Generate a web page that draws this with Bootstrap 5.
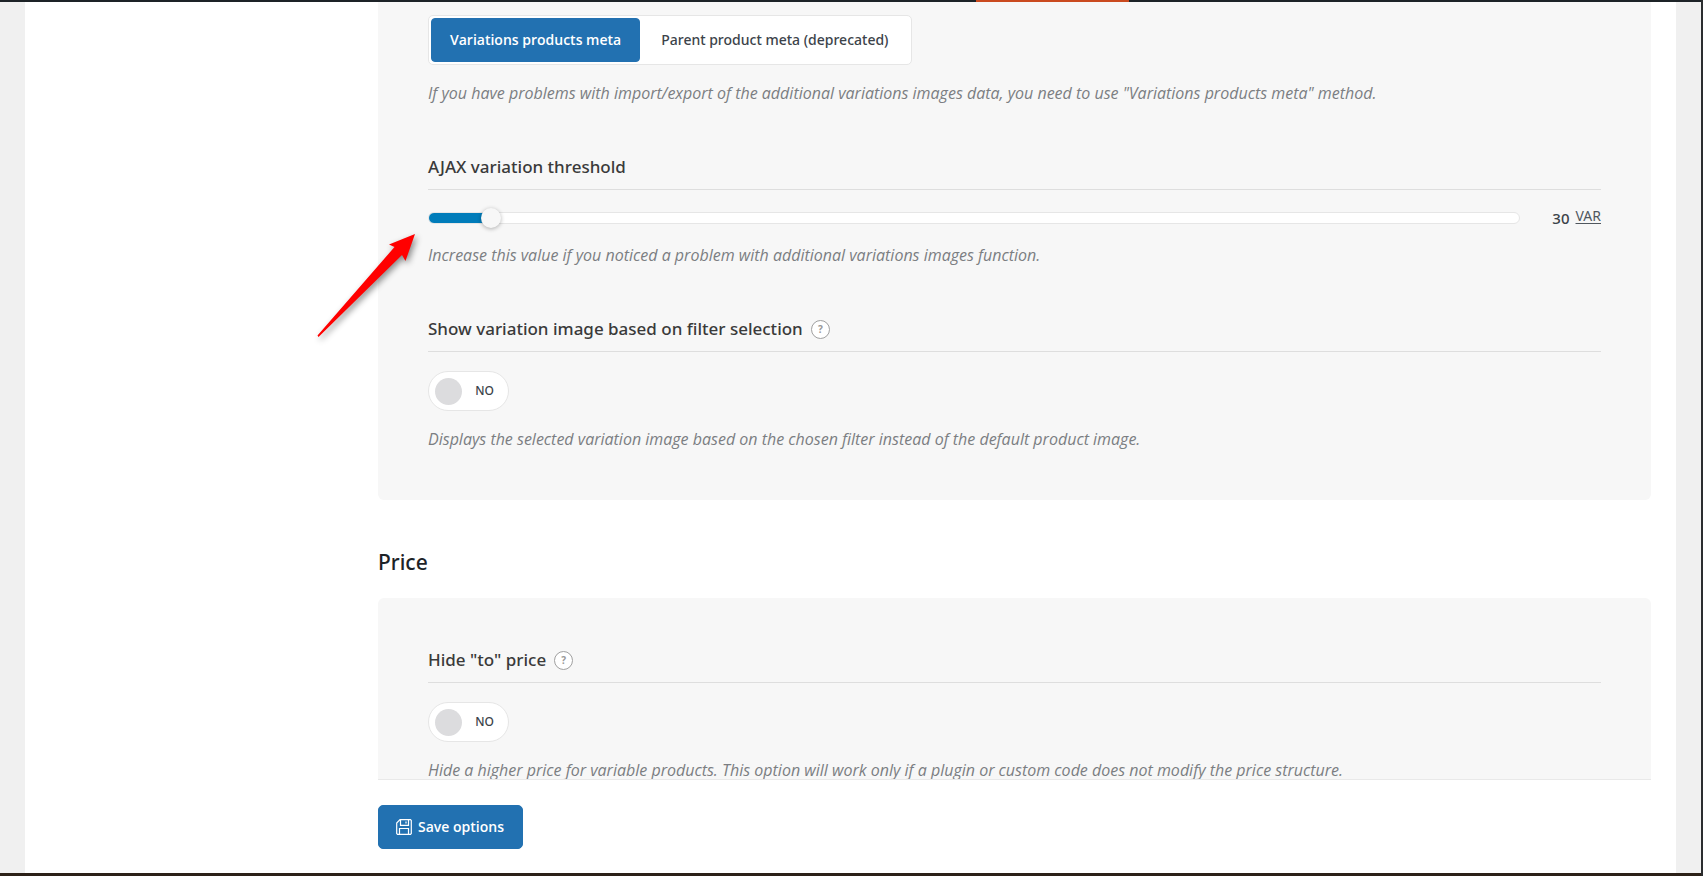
<!DOCTYPE html>
<html lang="en">
<head>
<meta charset="utf-8">
<meta name="viewport" content="width=device-width, initial-scale=1">
<title>Variable products options</title>
<link href="https://cdn.jsdelivr.net/npm/bootstrap@5.3.0/dist/css/bootstrap.min.css" rel="stylesheet">
<style>
body{font-family:"Noto Sans","Open Sans",sans-serif;font-size:14px;color:#3c434a;background:#f0f0f0;border-right:2px solid #2b2d2f}
.top-strip{height:2px;background:#1d2327}
.top-strip span{width:9%;margin-left:57.4%;background:#ca4a1f}
.bottom-strip{height:3px;background:#2c2118}
.page-body{margin:0 25px;background:#fff}
.scroll-area{padding:0 25px 0 353px}
.panel{background:#f7f7f7;border-radius:6px;padding:50px}
.panel-first{padding-top:13px;padding-bottom:49px;border-top-left-radius:0;border-top-right-radius:0}
.option{margin-bottom:50px}
.option:last-child{margin-bottom:0}
.option-title{font-size:17px;line-height:24px;font-weight:500;color:#3a3a3a;padding-bottom:10px;border-bottom:1px solid #dedede;margin:0 0 18px}
.option-title.d-flex{margin-bottom:19px}
.section-title{font-size:21px;line-height:24px;font-weight:500;color:#1d2327;margin:50px 0 24px}
.hint{font-family:"Open Sans","Noto Sans",sans-serif;font-size:16px;line-height:24px;font-style:italic;color:#7b7e82;margin:16px 0 0}
.choices{background:#fff;border:1px solid #e6e6e6;border-radius:5px;padding:2px}
.choices .btn{--bs-btn-color:#3c434a;font-size:14px;line-height:20px;font-weight:500;padding:11px 20px;border-radius:4px}
.choices .btn-check:checked+.btn{font-family:"Open Sans","Noto Sans",sans-serif;font-weight:600;color:#fff;background:#2271b1;border-color:#2271b1;padding:11px 18px}
.slider{appearance:none;-webkit-appearance:none;height:20px;background:none;margin:0}
.slider::-webkit-slider-runnable-track{height:12px;border:1px solid #e6e6e6;border-radius:6px;background:linear-gradient(#007cba,#007cba) 0 0/6% 100% no-repeat #fff}
.slider::-webkit-slider-thumb{-webkit-appearance:none;width:20px;height:20px;margin-top:-5px;border-radius:50%;background:#f7f7f7;box-shadow:0 1px 4px rgba(0,0,0,.3)}
.slider-value{width:81px;font-size:15px;line-height:20px;font-weight:500;gap:6px}
.slider-row+.hint{margin-top:15px}
.unit{font-size:14px;font-weight:400;line-height:16px;color:#50575e;text-underline-offset:2px}
.help{width:19px;height:19px;border:1px solid #a0a0a0;border-radius:50%;background:#fff;color:#999;font-size:10px;font-weight:700;line-height:17px}
.toggle{width:81px;height:40px;background:#fff;border:1px solid #e6e6e6;border-radius:20px;padding:0 14px 0 6px;font-size:12px;font-weight:500;color:#3c434a;cursor:pointer}
.toggle .knob{width:27px;height:27px;border-radius:50%;background:#dcdcde}
.pointer{left:-114px;top:22px;filter:drop-shadow(2px 3px 3px rgba(0,0,0,.45))}
.save-bar{border-top:1px solid #e9e9e9;padding:25px 0 24px;margin:0 25px 0 353px}
.save-bar .btn{--bs-btn-bg:#2271b1;--bs-btn-border-color:#2271b1;font-family:"Open Sans","Noto Sans",sans-serif;font-size:14px;line-height:20px;font-weight:600;padding:11px 18px 11px 17px;border-radius:5px;gap:6px}
</style>
</head>
<body class="d-flex flex-column vh-100 overflow-hidden">
<div class="top-strip d-flex flex-shrink-0"><span></span></div>
<main class="page-body d-flex flex-column flex-grow-1 overflow-hidden">
  <div class="scroll-area flex-grow-1 overflow-hidden">
    <section class="panel panel-first">
      <div class="option">
        <div class="choices d-inline-flex align-top" role="group" aria-label="Variations images storage">
          <input class="btn-check" type="radio" name="storage" id="storage-var" checked>
          <label class="btn" for="storage-var">Variations products meta</label>
          <input class="btn-check" type="radio" name="storage" id="storage-parent">
          <label class="btn" for="storage-parent">Parent product meta (deprecated)</label>
        </div>
        <p class="hint">If you have problems with import/export of the additional variations images data, you need to use "Variations products meta" method.</p>
      </div>
      <div class="option">
        <h3 class="option-title"><label for="threshold">AJAX variation threshold</label></h3>
        <div class="slider-row d-flex align-items-center position-relative">
          <input class="slider flex-grow-1" type="range" id="threshold" min="0" max="620" value="30">
          <div class="slider-value d-flex justify-content-end align-items-start"><span>30</span><a class="unit" href="#">VAR</a></div>
          <svg class="pointer position-absolute overflow-visible" width="104" height="108" viewBox="0 0 104 108" aria-hidden="true"><path fill="#f00" d="M101 4 75 14.500 80.500 17 3.500 105.500 4.500 107 88 25 91.500 31Z"/></svg>
        </div>
        <p class="hint">Increase this value if you noticed a problem with additional variations images function.</p>
      </div>
      <div class="option">
        <h3 class="option-title d-flex align-items-center gap-2">Show variation image based on filter selection <button type="button" class="help p-0 text-center" aria-label="Help">?</button></h3>
        <button type="button" class="toggle d-flex align-items-center justify-content-between" role="switch" aria-checked="false"><span class="knob"></span><span>NO</span></button>
        <p class="hint">Displays the selected variation image based on the chosen filter instead of the default product image.</p>
      </div>
    </section>
    <h2 class="section-title">Price</h2>
    <section class="panel">
      <div class="option">
        <h3 class="option-title d-flex align-items-center gap-2">Hide "to" price <button type="button" class="help p-0 text-center" aria-label="Help">?</button></h3>
        <button type="button" class="toggle d-flex align-items-center justify-content-between" role="switch" aria-checked="false"><span class="knob"></span><span>NO</span></button>
        <p class="hint">Hide a higher price for variable products. This option will work only if a plugin or custom code does not modify the price structure.</p>
      </div>
    </section>
  </div>
  <div class="save-bar flex-shrink-0">
    <button type="submit" class="btn btn-primary d-inline-flex align-items-center align-top">
      <svg width="16" height="16" viewBox="0 0 16 16" fill="none" stroke="currentColor" stroke-width="1.200" aria-hidden="true"><path d="M4 .700H14.500L15.300 1.500V14.500L14.500 15.300H1.500L.700 14.500V4ZM4.500 1V6.300H12.500V1M10 2.500V4.500M3.500 15V9.500H12.500V15"/></svg>
      Save options
    </button>
  </div>
</main>
<div class="bottom-strip flex-shrink-0"></div>
<script src="https://cdn.jsdelivr.net/npm/bootstrap@5.3.0/dist/js/bootstrap.bundle.min.js"></script>
</body>
</html>
